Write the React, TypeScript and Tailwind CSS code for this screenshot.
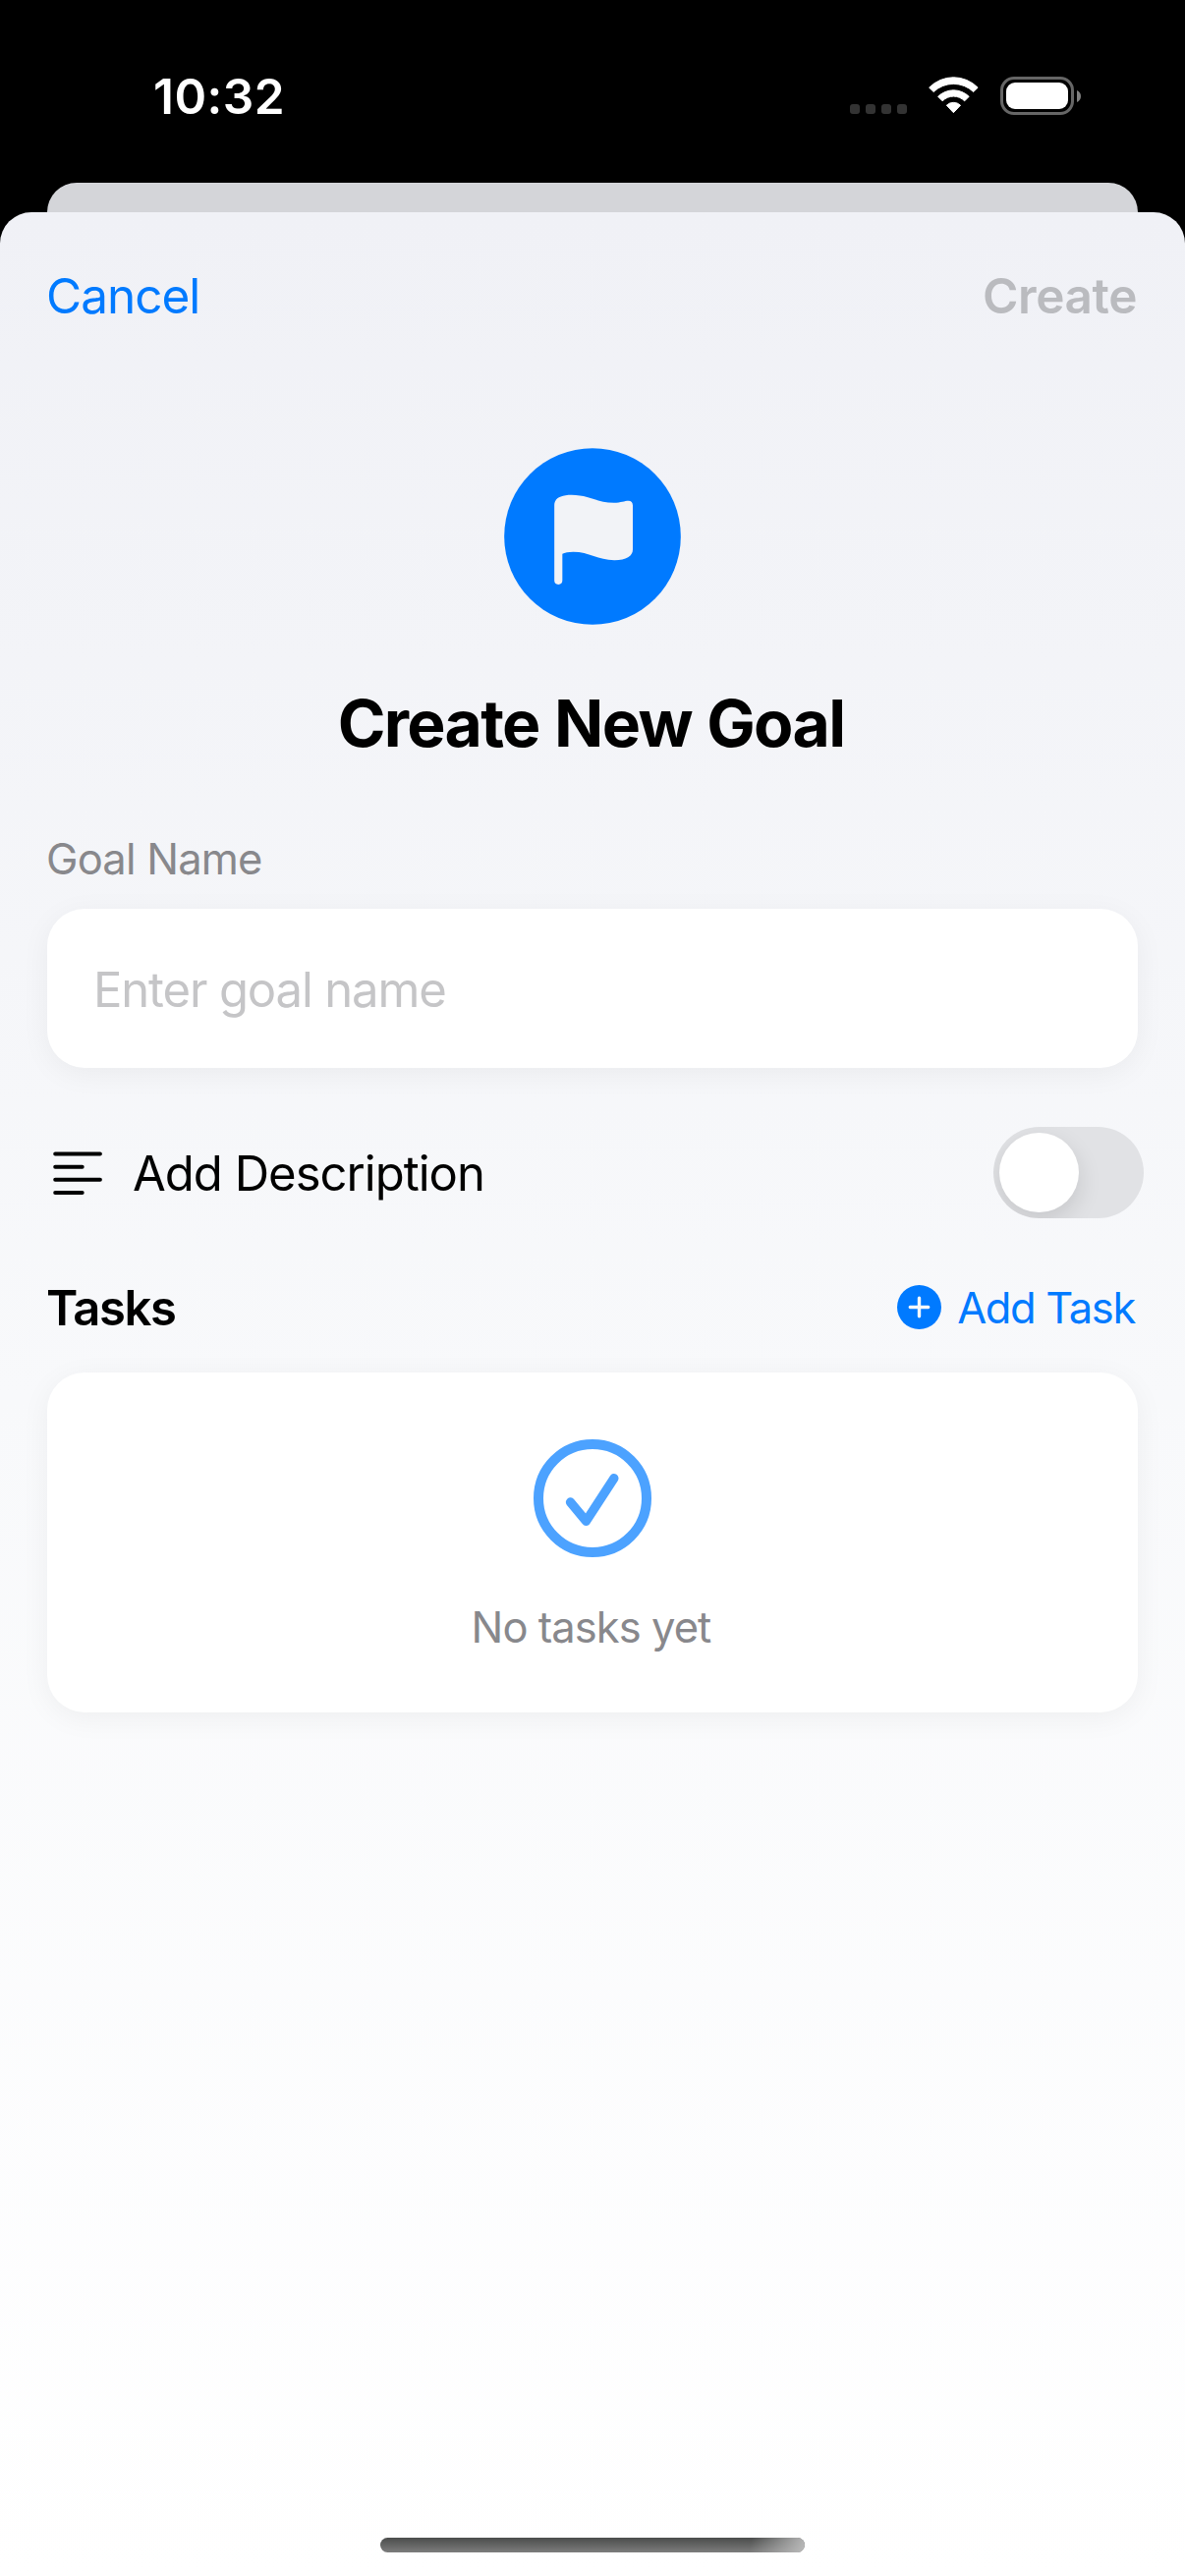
import React from "react";

function WifiIcon() {
  return (
    <svg viewBox="15 56 153 114" className="h-[38px] w-[51px]" fill="#fff" stroke="#fff" strokeWidth="3" strokeLinejoin="round">
      <path d="M17 89.500A104 104 0 0 1 165.500 89.500L152 102.500A88 88 0 0 0 30.500 102.500Z" />
      <path d="M44 117A67 67 0 0 1 138.500 117L125 130.500A47 47 0 0 0 57.500 130.500Z" />
      <path d="M70 143.500A31 31 0 0 1 112.500 143.500L91.200 166Z" />
    </svg>
  );
}

function Battery() {
  return (
    <div className="flex items-center gap-[3px]">
      <div className="h-[39px] w-[75px] rounded-[14px] border-[3px] border-[#666] p-[3px]">
        <div className="h-full w-full rounded-[9px] bg-white" />
      </div>
      <svg viewBox="0 0 4 12" className="h-3 w-1">
        <path d="M0 0C2.600 1 4 3.400 4 6S2.600 11 0 12Z" fill="#808080" />
      </svg>
    </div>
  );
}

function StatusBar() {
  return (
    <div className="flex h-[186px] justify-between pl-[156px] pr-[106px]">
      <div className="mt-[68px] h-[60px] text-[49.5px] leading-[60px] font-semibold tracking-[0.5px] text-white">10:32</div>
      <div className="mt-[78px] flex h-[39px]">
        <div className="mt-[28px] flex h-[10px] gap-[6px]">
          <span className="size-[10px] rounded-[3px] bg-[#333]" />
          <span className="size-[10px] rounded-[3px] bg-[#333]" />
          <span className="size-[10px] rounded-[3px] bg-[#333]" />
          <span className="size-[10px] rounded-[3px] bg-[#333]" />
        </div>
        <div className="mr-[22px] ml-[22px]">
          <WifiIcon />
        </div>
        <Battery />
      </div>
    </div>
  );
}

function FlagBadge() {
  return (
    <svg viewBox="99 78.500 540 540" className="size-[180px]">
      <circle cx="369" cy="348.500" r="269.500" fill="#007aff" />
      <path
        fill="#f2f3f7"
        d="M252.500 252C252.500 234 270 222 305 222C358 222 385 246 434 246C457 246 466 240 479 240C487 240 492 245 492 254V388C492 408 472 421 436 421C385 421 360 396 310 396C296 396 284 398 277 402V483A12.250 12.250 0 0 1 252.500 483Z"
      />
    </svg>
  );
}

function TextLinesIcon() {
  return (
    <svg viewBox="0 0 50 44" className="h-11 w-[50px]" stroke="#000" strokeWidth="4" strokeLinecap="round">
      <path d="M2.200 2.500H47.900M2.200 15.700H29.700M2.200 28.800H47.900M2.200 41.900H29.700" />
    </svg>
  );
}

function PlusCircleIcon() {
  return (
    <svg viewBox="0 0 45 45" className="size-[45px]">
      <circle cx="22.500" cy="22.500" r="22.500" fill="#007aff" />
      <path d="M13.300 22.500H31.700M22.500 13.300V31.700" stroke="#f7f8fa" strokeWidth="3.400" strokeLinecap="round" />
    </svg>
  );
}

function CheckCircleIcon() {
  return (
    <svg viewBox="308.500 105 360 360" className="size-[120px]" fill="none" stroke="#4ca2ff">
      <circle cx="488.500" cy="285" r="165" strokeWidth="30" />
      <path d="M421 297L469 355L554 224" strokeWidth="28" strokeLinecap="round" strokeLinejoin="round" />
    </svg>
  );
}

function Toggle() {
  return (
    <div className="-mr-[6px] h-[93px] w-[153px] overflow-hidden rounded-full bg-[#e1e2e5] p-[6px]">
      <div className="size-[81px] rounded-full bg-white shadow-[0_9px_24px_rgba(0,0,0,0.12)]" />
    </div>
  );
}

export default function App() {
  return (
    <div className="flex h-[2622px] w-[1206px] flex-col overflow-hidden bg-black font-[Inter,sans-serif] whitespace-nowrap">
      <StatusBar />
      <div className="mx-12 -mb-3 h-[42px] shrink-0 rounded-t-[30px] bg-[#d4d5d9]" />
      <main className="relative flex flex-1 flex-col rounded-t-[32px] bg-gradient-to-b from-[#f0f1f6] via-[#f8f9fb] to-white px-12 pt-[55px]">
        <div className="flex h-[60px] items-center justify-between text-[49.5px] leading-[60px]">
          <button className="-ml-px tracking-[-1px] text-[#007aff]">Cancel</button>
          <button className="mr-px font-semibold tracking-[-0.4px] text-[#babbbf]">Create</button>
        </div>

        <div className="mt-[125px] flex flex-col items-center">
          <FlagBadge />
          <h1 className="mt-[60px] mr-[3px] text-[66px] leading-[80px] font-bold tracking-[-1.7px] text-black [word-spacing:1.5px]">Create New Goal</h1>
        </div>

        <label className="-ml-px mt-[71px] text-[43.5px] leading-[54px] tracking-[-0.8px] text-[#88888c]">Goal Name</label>
        <div className="mt-6 flex h-[162px] items-center rounded-[38px] bg-white pl-[47px] text-[49px] leading-[60px] tracking-[-1.14px] text-[#c5c5c7] shadow-[0_6px_30px_rgba(0,0,0,0.05)]">
          <span className="pt-[3px]">Enter goal name</span>
        </div>

        <div className="mt-[60px] flex h-[93px] items-center justify-between">
          <div className="flex items-center gap-[31px] pl-[6px]">
            <TextLinesIcon />
            <span className="pt-[2px] text-[49px] leading-[60px] tracking-[-0.98px] text-black">Add Description</span>
          </div>
          <Toggle />
        </div>

        <div className="mt-[61px] flex h-[60px] items-center justify-between">
          <h2 className="-ml-px pt-[2px] text-[49px] leading-[60px] font-semibold tracking-[-1.4px] text-black">Tasks</h2>
          <button className="mr-[3px] flex items-center gap-4 text-[43.5px] leading-[60px] tracking-[-1.35px] text-[#007aff]">
            <span className="-mt-px">
              <PlusCircleIcon />
            </span>
            Add Task
          </button>
        </div>

        <div className="mt-9 flex h-[346px] flex-col items-center rounded-[38px] bg-white pt-[68px] shadow-[0_6px_30px_rgba(0,0,0,0.05)]">
          <CheckCircleIcon />
          <p className="mt-[44px] mr-[3px] text-[43.5px] leading-[54px] tracking-[-0.95px] text-[#88888c]">No tasks yet</p>
        </div>

        <div className="mx-auto mt-auto mb-6 h-[15px] w-[432px] overflow-hidden rounded-full bg-gradient-to-b from-[#4b4d4c] to-[#7d7d7d]">
          <div className="ml-auto h-full w-[60px] bg-[linear-gradient(100deg,rgba(190,190,190,0)_10%,rgba(190,190,190,0.95)_100%)]" />
        </div>
      </main>
    </div>
  );
}
